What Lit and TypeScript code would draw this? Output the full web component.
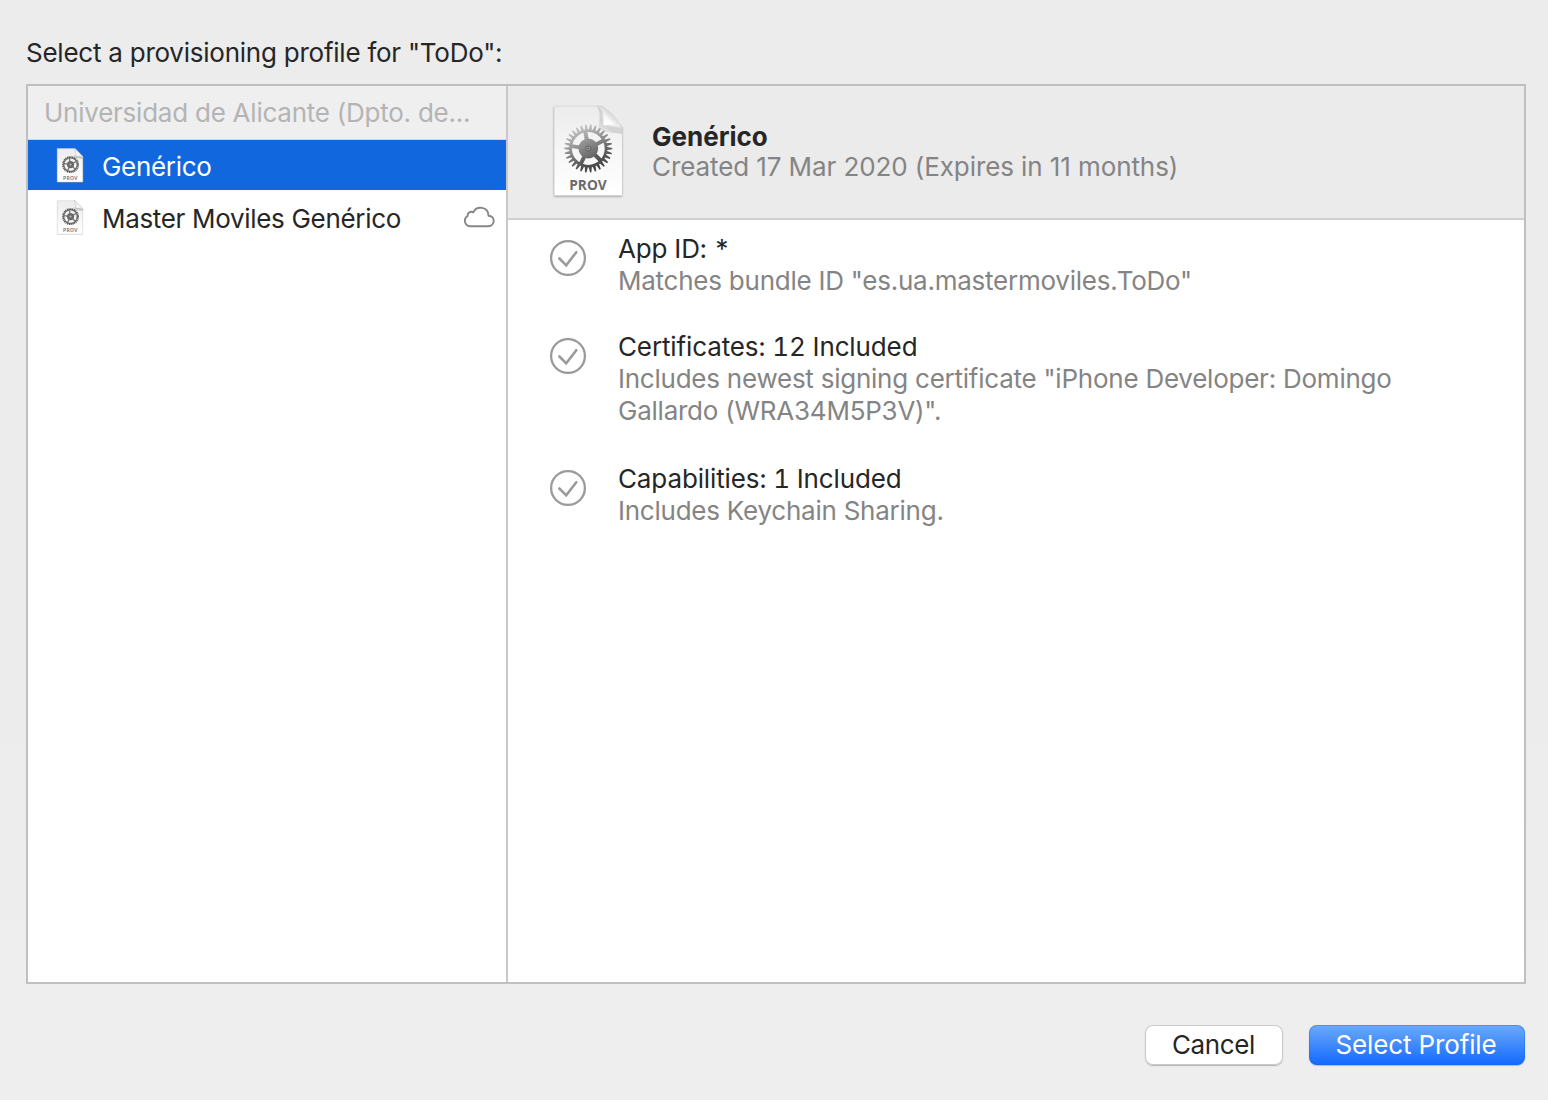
import { LitElement, html, css, svg, nothing } from "lit";
import { customElement, property, state } from "lit/decorators.js";

interface Check {
  title: string;
  lines: string[];
}

interface Profile {
  name: string;
  cloud: boolean;
}

const PROFILES: Profile[] = [
  { name: "Genérico", cloud: false },
  { name: "Master Moviles Genérico", cloud: true },
];

const CHECKS: Check[] = [
  { title: "App ID: *", lines: ['Matches bundle ID "es.ua.mastermoviles.ToDo"'] },
  {
    title: "Certificates: 12 Included",
    lines: [
      'Includes newest signing certificate "iPhone Developer: Domingo',
      'Gallardo (WRA34M5P3V)".',
    ],
  },
  { title: "Capabilities: 1 Included", lines: ["Includes Keychain Sharing."] },
];

/** Outline of a toothed wheel centred on the origin. */
function gearPath(teeth: number, outer: number, root: number): string {
  const step = (Math.PI * 2) / teeth;
  const at = (r: number, a: number) =>
    `${(r * Math.cos(a)).toFixed(2)} ${(r * Math.sin(a)).toFixed(2)}`;
  let d = "";
  for (let i = 0; i < teeth; i++) {
    const a = i * step;
    d += `${i ? "L" : "M"}${at(root, a - step * 0.38)}L${at(outer, a - step * 0.12)}`;
    d += `L${at(outer, a + step * 0.16)}L${at(root, a + step * 0.36)}`;
  }
  return d + "Z";
}

const ring = (r: number) => `M${r} 0A${r} ${r} 0 1 0 ${-r} 0A${r} ${r} 0 1 0 ${r} 0Z`;

/** Five straight spokes running from the hub to the rim. */
function spokes(from: number, to: number): string {
  return [-100, -28, 44, 116, 188]
    .map((deg) => {
      const a = (deg * Math.PI) / 180;
      const x = Math.cos(a);
      const y = Math.sin(a);
      return `M${(x * from).toFixed(2)} ${(y * from).toFixed(2)}L${(x * to).toFixed(2)} ${(y * to).toFixed(2)}`;
    })
    .join("");
}

@customElement("profile-document")
class ProfileDocument extends LitElement {
  @property({ type: Boolean }) small = false;

  static styles = css`
    :host { display: block; line-height: 0; letter-spacing: 0; }
    svg { display: block; overflow: visible; }
    .label { font-family: "Open Sans", "Noto Sans", sans-serif; font-weight: 700; }
    .light { font-weight: 600; }
    .shadow { filter: blur(1.3px); }
  `;

  private defs() {
    return svg`<defs>
      <linearGradient id="paper" x1="0" y1="0" x2="0" y2="1">
        <stop offset="0" stop-color="#ececec"/><stop offset=".55" stop-color="#f7f7f7"/><stop offset="1" stop-color="#fff"/>
      </linearGradient>
      <linearGradient id="metal" gradientUnits="userSpaceOnUse" x1="-10" y1="-22" x2="10" y2="22">
        <stop offset="0" stop-color="#c6c6c6"/><stop offset=".35" stop-color="#979797"/><stop offset=".7" stop-color="#5c5c5c"/><stop offset="1" stop-color="#3e3e3e"/>
      </linearGradient>
      <linearGradient id="hub" x1="0" y1="0" x2=".5" y2="1">
        <stop offset="0" stop-color="#a2a2a2"/><stop offset="1" stop-color="#686868"/>
      </linearGradient>
      <linearGradient id="curl" gradientUnits="userSpaceOnUse" x1="51" y1="22" x2="61" y2="11">
        <stop offset="0" stop-color="#fff"/><stop offset=".5" stop-color="#fcfcfc"/><stop offset="1" stop-color="#d6d6d6"/>
      </linearGradient>
      <linearGradient id="fold" gradientUnits="userSpaceOnUse" x1="44" y1="30" x2="53" y2="20">
        <stop offset="0" stop-color="#b8b8b8" stop-opacity="0"/><stop offset="1" stop-color="#ababab"/>
      </linearGradient>
    </defs>`;
  }

  render() {
    if (this.small) {
      return html`<svg width="28" height="36" viewBox="0 0 28 36">
        ${this.defs()}
        <path d="M1 2H19L27 10V35.600H1Z" fill="#777" opacity=".35"/>
        <path d="M1.200 1.600H19L26.800 9.600V35H1.200Z" fill="url(#paper)" stroke="#d0d0d0" stroke-width=".4"/>
        <path d="M17.500 8.500L19.500 10.800L26.800 12V9.500Z" fill="#aaa" opacity=".6"/>
        <path d="M18 1.600C20 4 20 7 19.400 9.400C22 9 25 9.200 26.800 10.400V9.600L19 1.600Z" fill="#f6f6f6" stroke="#b0b0b0" stroke-width=".5"/>
        <g transform="translate(14.500 17.600)">
          <circle r="6.800" fill="none" stroke="#7a7a7a" stroke-width="1.500"/>
          <circle r="7.700" fill="none" stroke="#4e4e4e" stroke-width="1.600" stroke-dasharray="1 .8"/>
          <circle r="3.600" fill="#686868"/>
          <path d=${spokes(3, 6.6)} stroke="#747474" stroke-width="1.300"/>
          <circle r="1.100" fill="#b4b4b4"/>
        </g>
        <text class="label light" x="14.200" y="33.200" text-anchor="middle" font-size="5" textLength="14.500" fill="#666">PROV</text>
      </svg>`;
    }
    return html`<svg width="72" height="94" viewBox="0 0 72 94">
      ${this.defs()}
      <path class="shadow" d="M2 3H50L70 24V92.500H2Z" fill="#777" opacity=".75"/>
      <path d="M2 2H46C56 5 66 15 70 25V91.500H2Z" fill="url(#paper)"/>
      <path d="M2.400 91V2.400H46" fill="none" stroke="#dcdcdc" stroke-width=".8"/>
      <path d="M44 2C49 7 48 14 46 27L70 30V24L51 21L50 5Z" fill="url(#fold)" opacity=".42"/>
      <path d="M46 2C52 7 52 14 50.800 21.800C58 20.500 66 21.500 70 25.500C66 15 57 4 46 2Z" fill="url(#curl)" stroke="#cacaca" stroke-width=".4"/>
      <g transform="translate(36.300 44.500)">
        <path d=${gearPath(30, 24, 19) + ring(16.4)} fill="url(#metal)" fill-rule="evenodd"/>
        <path d=${spokes(8, 17.2)} stroke="url(#metal)" stroke-width="4"/>
        <circle r="9.900" fill="url(#hub)"/>
        <circle r="2.600" fill="#9c9c9c" stroke="#5e5e5e" stroke-width="1"/>
        <circle r="1" fill="#606060"/>
      </g>
      <text class="label" x="36" y="86.400" text-anchor="middle" font-size="13.600" textLength="37.500" lengthAdjust="spacingAndGlyphs" fill="#6a6a6a">PROV</text>
    </svg>`;
  }
}

@customElement("app-root")
class AppRoot extends LitElement {
  @state() private selected = 0;

  static styles = css`
    :host {
      display: flex; flex-direction: column; box-sizing: border-box;
      width: 1548px; height: 1100px; padding: 36px 22px 0 26px;
      background: linear-gradient(#ececec, #ececec 60%, #eee 92%); color: #262626;
      font: 400 26px/32px Inter, "Liberation Sans", sans-serif;
      letter-spacing: -0.24px;
      overflow: hidden;
    }
    * { box-sizing: border-box; }
    .prompt { height: 48px; flex: none; line-height: 34px; white-space: nowrap; }
    .panes {
      display: grid; grid-template-columns: 480px 1fr; flex: none;
      height: 900px; border: 2px solid #bfbfbf; background: #fff;
    }
    .list { border-right: 2px solid #c8c8c8; }
    .team {
      height: 54px; padding: 0 0 0 16px; line-height: 54px; background: #efefef;
      border-bottom: 1px solid #d4d4d4; color: #b4b4b4; white-space: nowrap;
    }
    .row {
      display: flex; align-items: center; height: 50px; padding: 0 11px 0 28px; gap: 18px;
      margin-bottom: 2px; cursor: default; letter-spacing: -0.32px;
    }
    .row.selected { background: #1167de; color: #fff; }
    .name { flex: 1; white-space: nowrap; padding-top: 3px; }
    .cloud { display: block; flex: none; }
    .head {
      display: flex; align-items: flex-start; height: 134px; padding: 18px 0 0 44px; gap: 28px;
      background: #ebebeb; border-bottom: 2px solid #d0d0d0;
    }
    .about { padding-top: 18px; line-height: 30px; white-space: nowrap; letter-spacing: -0.09px; }
    .strong { font-weight: 700; letter-spacing: 0; }
    .muted { color: #848484; }
    .checks { display: flex; flex-direction: column; padding: 13px 0 0 41px; }
    .check { display: flex; gap: 31px; white-space: nowrap; margin-bottom: 34px; }
    .check.tall { margin-bottom: 36px; }
    .title { font-variant-numeric: tabular-nums; letter-spacing: -0.12px; }
    .tick { display: block; flex: none; margin-top: 6px; }
    .actions { display: flex; justify-content: flex-end; gap: 26px; margin-top: 41px; padding-right: 1px; }
    button {
      height: 40px; padding: 0 1px 0 0; border: 0; border-radius: 8px; font: inherit; line-height: 40px;
      color: #262626; background: #fff; width: 138px; white-space: nowrap; letter-spacing: -0.35px;
      box-shadow: inset 0 0 0 1px #c9c9c9, 0 1px 1px #b4b4b4;
    }
    button.primary {
      width: 216px; padding-right: 2px; color: #fff; background: linear-gradient(#6caaf9, #1269fe); letter-spacing: -0.14px;
      box-shadow: inset 0 0 0 1px rgba(20, 100, 230, .35), 0 1px 1px #a9bddc;
    }
  `;

  render() {
    return html`
      <div class="prompt">Select a provisioning profile for "ToDo":</div>
      <div class="panes">
        <div class="list">
          <div class="team">Universidad de Alicante (Dpto. de...</div>
          ${PROFILES.map(
            (p, i) => html`<div class="row ${i === this.selected ? "selected" : ""}" @click=${() => (this.selected = i)}>
              <profile-document small></profile-document>
              <span class="name">${p.name}</span>
              ${p.cloud
                ? html`<svg class="cloud" width="32" height="22" viewBox="0 0 32 22">
                    <path d="M7 20.200A5.500 5.500 0 0 1 4.600 10C4.200 6.900 7.600 4.800 10.300 6.300C13.500 -.8 25.300 .6 25.500 9.700C32.600 9.900 32.400 20.200 25 20.200Z" fill="none" stroke="#868686" stroke-width="1.900" stroke-linejoin="round"/>
                  </svg>`
                : nothing}
            </div>`,
          )}
        </div>
        <div class="detail">
          <div class="head">
            <profile-document></profile-document>
            <div class="about">
              <div class="strong">${PROFILES[0].name}</div>
              <div class="muted">Created 17 Mar 2020 (Expires in 11 months)</div>
            </div>
          </div>
          <div class="checks">
            ${CHECKS.map(
              (c) => html`<div class="check ${c.lines.length > 1 ? "tall" : ""}">
                <svg class="tick" width="38" height="38" viewBox="0 0 38 38" fill="none" stroke="#9a9a9a">
                  <circle cx="19" cy="19" r="16.900" stroke-width="2.300"/>
                  <path d="M10.400 19.500L17.200 26.300L27.300 13.200" stroke-width="2.600" stroke-linecap="round"/>
                </svg>
                <div>
                  <div class="title">${c.title}</div>
                  ${c.lines.map((l) => html`<div class="muted">${l}</div>`)}
                </div>
              </div>`,
            )}
          </div>
        </div>
      </div>
      <div class="actions">
        <button>Cancel</button>
        <button class="primary">Select Profile</button>
      </div>
    `;
  }
}
